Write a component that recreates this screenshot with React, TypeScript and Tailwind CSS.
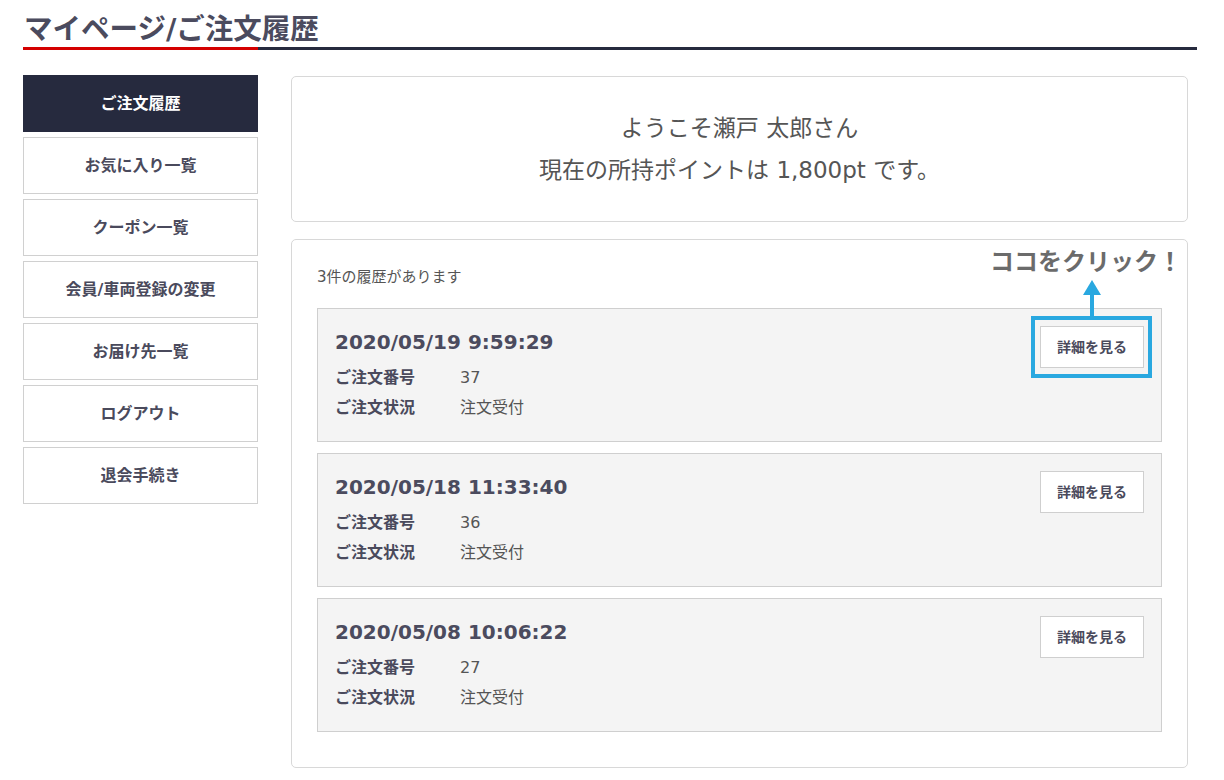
const font = "font-['DejaVu_Sans','Noto_Sans_CJK_JP',sans-serif]";

const menu = [
  "ご注文履歴",
  "お気に入り一覧",
  "クーポン一覧",
  "会員/車両登録の変更",
  "お届け先一覧",
  "ログアウト",
  "退会手続き",
];

const orders = [
  { date: "2020/05/19 9:59:29", no: "37", status: "注文受付" },
  { date: "2020/05/18 11:33:40", no: "36", status: "注文受付" },
  { date: "2020/05/08 10:06:22", no: "27", status: "注文受付" },
];

export default function App() {
  return (
    <div className={`${font} min-h-[780px] bg-white text-[#4a4a5c]`}>
      <div className="ml-[23px] w-[1174px]">
        {/* Page title */}
        <h1 className="pt-[13px] pl-px text-[28.5px] font-bold leading-[34px] text-[#4b4b5e]">
          マイページ/ご注文履歴
        </h1>
        <div className="flex h-[3px]">
          <div className="w-[235px] bg-[#d40000]" />
          <div className="flex-1 bg-[#262a3e]" />
        </div>

        <div className="mt-[25px] flex gap-[33px]">
          {/* Sidebar */}
          <nav className="flex w-[235px] shrink-0 flex-col gap-[5px]">
            {menu.map((m, i) => (
              <div
                key={m}
                className={
                  i === 0
                    ? "flex h-[57px] items-center justify-center border border-[#262a3e] bg-[#262a3e] text-[16px] font-bold text-white"
                    : "flex h-[57px] items-center justify-center border border-[#d0d0d0] bg-white text-[16px] font-bold text-[#4a4a5c]"
                }
              >
                {m}
              </div>
            ))}
          </nav>

          {/* Main */}
          <main className="mt-px flex w-[897px] flex-col gap-[17px]">
            <div className="flex h-[146px] flex-col items-center justify-center rounded-[5px] border border-[#d8d8d8] text-[23px] leading-[42px] text-[#555]">
              <p>ようこそ瀬戸 太郎さん</p>
              <p>現在の所持ポイントは 1,800pt です。</p>
            </div>

            <div className="relative h-[529px] rounded-[5px] border border-[#d8d8d8] px-[25px] pt-[27px]">
              <p className="text-[15px] leading-[20px] text-[#555]">3件の履歴があります</p>

              {/* annotation */}
              <div className="absolute left-[698px] top-[8px] text-[24px] font-bold leading-[29px] text-[#6b6b6b]">
                ココをクリック！
              </div>
              <svg className="absolute left-[791px] top-[40px]" width="18" height="36" viewBox="0 0 18 36">
                <path d="M9 0 L18 15 L0 15 Z" fill="#29a8e0" />
                <rect x="7" y="14" width="4" height="22" fill="#29a8e0" />
              </svg>

              <div className="mt-[21px] flex flex-col gap-[11px]">
                {orders.map((o, i) => (
                  <div
                    key={o.date}
                    className="flex h-[134px] justify-between border border-[#cfcfcf] bg-[#f4f4f4] pl-[17px] pr-[17px] pt-[16px]"
                  >
                    <div>
                      <div className="text-[20px] font-bold leading-[34px] text-[#4b4b5e]">{o.date}</div>
                      <div className="mt-[4px] flex text-[16px] leading-[30px]">
                        <span className="w-[125px] font-bold">ご注文番号</span>
                        <span className="text-[#555]">{o.no}</span>
                      </div>
                      <div className="flex text-[16px] leading-[30px]">
                        <span className="w-[125px] font-bold">ご注文状況</span>
                        <span className="text-[#555]">{o.status}</span>
                      </div>
                    </div>
                    <div className="relative mt-px h-[42px] w-[104px]">
                      <button className="flex h-full w-full items-center justify-center border border-[#cfcfcf] bg-white text-[14px] font-bold text-[#4a4a5c]">
                        詳細を見る
                      </button>
                      {i === 0 && (
                        <div className="absolute -bottom-[10px] -left-[9px] -right-[8px] -top-[10px] border-4 border-[#29a8e0]" />
                      )}
                    </div>
                  </div>
                ))}
              </div>
            </div>
          </main>
        </div>
      </div>
    </div>
  );
}
